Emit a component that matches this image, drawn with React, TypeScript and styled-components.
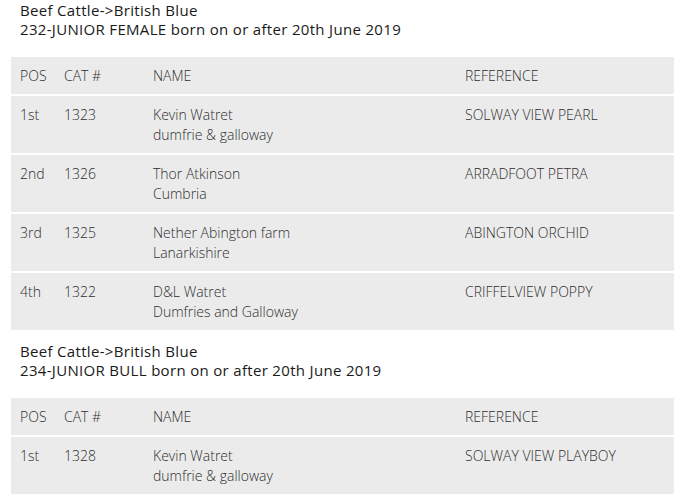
import React from "react";
import styled, { createGlobalStyle } from "styled-components";

const Global = createGlobalStyle`
  html, body { margin: 0; padding: 0; background: #fff; }
  body { font-family: "Open Sans", "Liberation Sans", sans-serif; }
`;

const Page = styled.div`
  padding: 1px 11px 0;
`;

const Section = styled.section`
  & + & { margin-top: 10px; }
`;

const Heading = styled.div`
  padding-left: 9px;
  font-size: 15px;
  line-height: 19px;
  font-weight: 400;
  letter-spacing: 0.32px;
  color: #1a1a1a;
`;

const Table = styled.table`
  margin-top: 18px;
  width: 100%;
  border-collapse: collapse;
  table-layout: fixed;
  font-size: 14px;
  line-height: 20px;
  font-weight: 300;
  color: #2e2e2e;
`;

const Row = styled.tr`
  background: #ebebeb;
  border-bottom: 2px solid #fff;
`;

const HeadCell = styled.th<{ $w?: number }>`
  box-sizing: border-box;
  width: ${(p) => (p.$w ? `${p.$w}px` : "auto")};
  text-align: left;
  font-weight: 300;
  padding: 9px 9px 8px;
  vertical-align: top;
`;

const Cell = styled.td`
  padding: 9px 9px 8px;
  vertical-align: top;
`;

type Entry = { pos: string; cat: string; name: string; place: string; ref: string };

const sections: { title: string; cls: string; rows: Entry[] }[] = [
  {
    title: "Beef Cattle->British Blue",
    cls: "232-JUNIOR FEMALE born on or after 20th June 2019",
    rows: [
      { pos: "1st", cat: "1323", name: "Kevin Watret", place: "dumfrie & galloway", ref: "SOLWAY VIEW PEARL" },
      { pos: "2nd", cat: "1326", name: "Thor Atkinson", place: "Cumbria", ref: "ARRADFOOT PETRA" },
      { pos: "3rd", cat: "1325", name: "Nether Abington farm", place: "Lanarkishire", ref: "ABINGTON ORCHID" },
      { pos: "4th", cat: "1322", name: "D&L Watret", place: "Dumfries and Galloway", ref: "CRIFFELVIEW POPPY" },
    ],
  },
  {
    title: "Beef Cattle->British Blue",
    cls: "234-JUNIOR BULL born on or after 20th June 2019",
    rows: [
      { pos: "1st", cat: "1328", name: "Kevin Watret", place: "dumfrie & galloway", ref: "SOLWAY VIEW PLAYBOY" },
    ],
  },
];

export default function App() {
  return (
    <Page>
      <Global />
      {sections.map((s, i) => (
        <Section key={i}>
          <Heading>
            {s.title}
            <br />
            {s.cls}
          </Heading>
          <Table>
            <thead>
              <Row>
                <HeadCell $w={44}>POS</HeadCell>
                <HeadCell $w={89}>CAT #</HeadCell>
                <HeadCell $w={312}>NAME</HeadCell>
                <HeadCell>REFERENCE</HeadCell>
              </Row>
            </thead>
            <tbody>
              {s.rows.map((r) => (
                <Row key={r.cat}>
                  <Cell>{r.pos}</Cell>
                  <Cell>{r.cat}</Cell>
                  <Cell>
                    {r.name}
                    <br />
                    {r.place}
                  </Cell>
                  <Cell>{r.ref}</Cell>
                </Row>
              ))}
            </tbody>
          </Table>
        </Section>
      ))}
    </Page>
  );
}
